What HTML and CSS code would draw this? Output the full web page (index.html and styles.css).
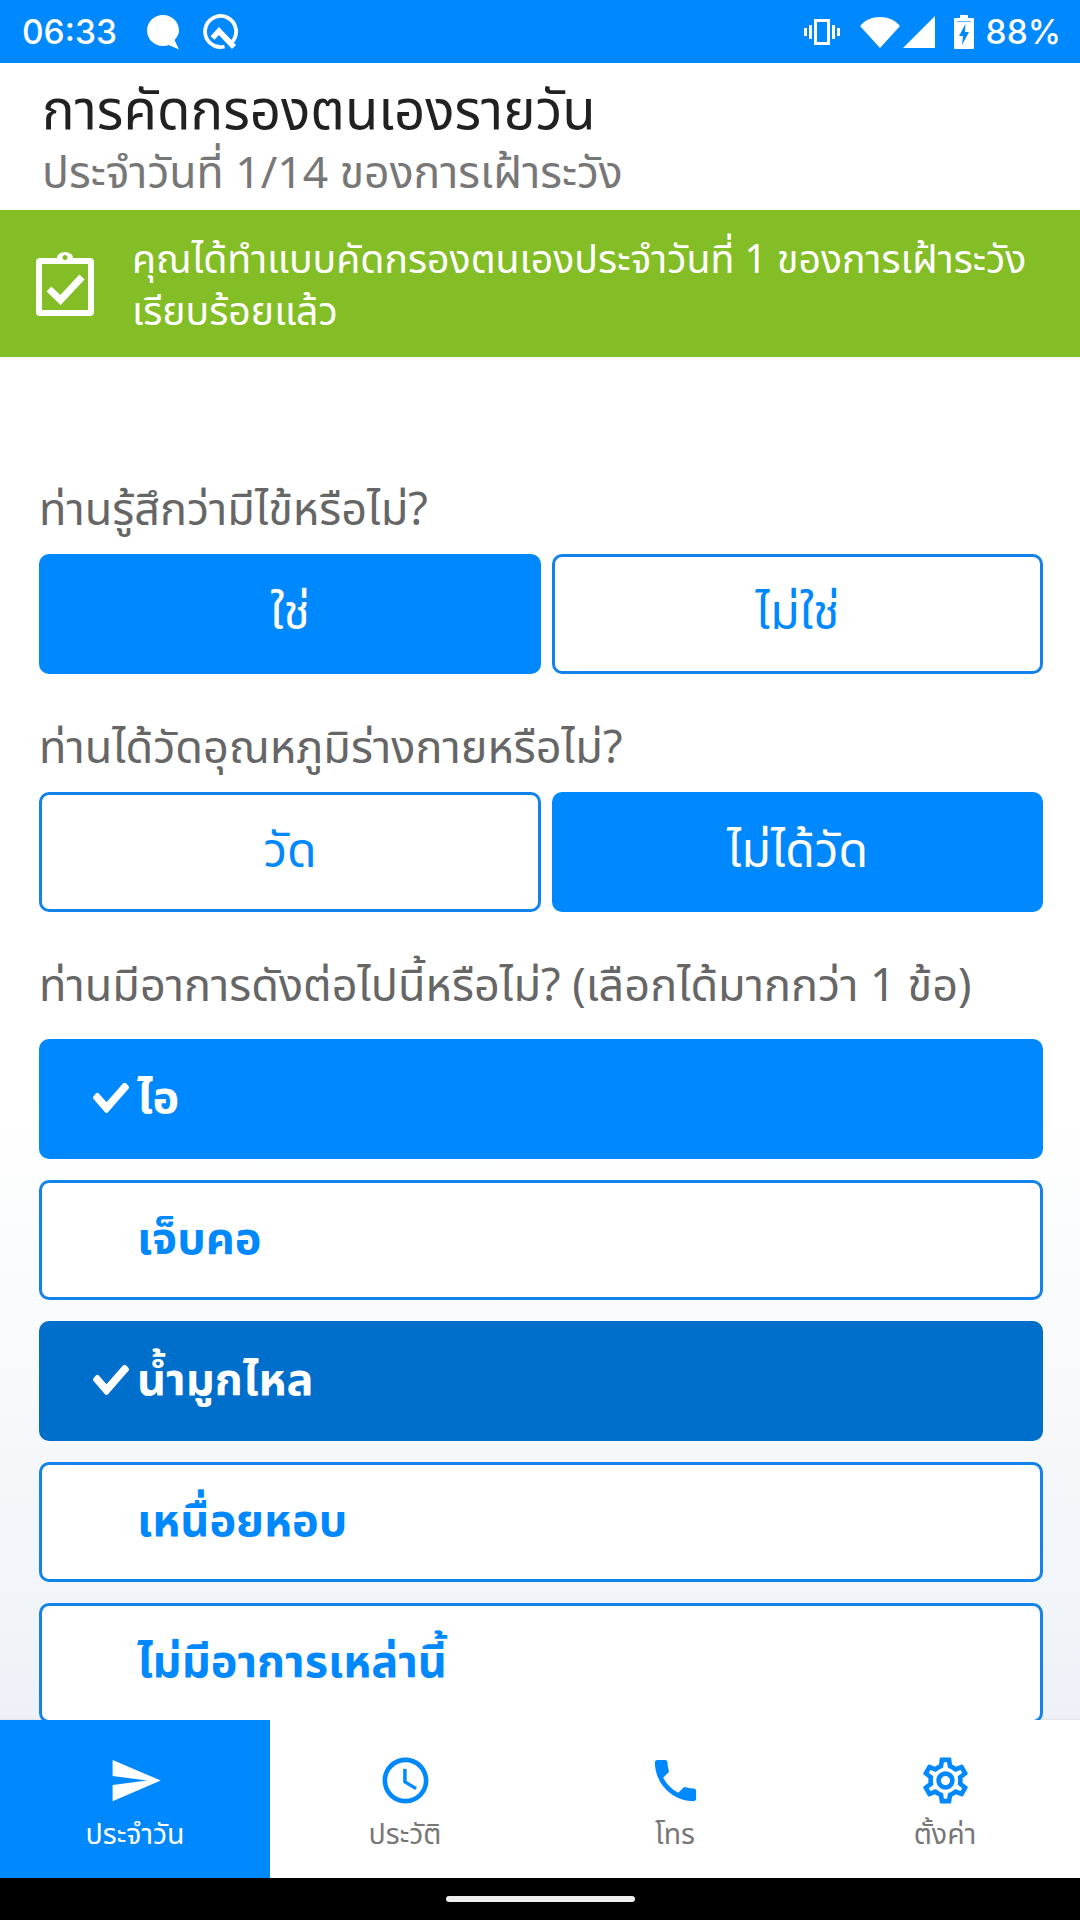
FILE: index.html
```html
<!DOCTYPE html>
<html lang="th">
<head>
    <meta charset="UTF-8">
    <meta name="viewport" content="width=device-width, initial-scale=1.0">
    <title>การคัดกรองตนเองรายวัน</title>
    <link rel="stylesheet" href="styles.css">
</head>
<body>
    <div class="screen">

        <!-- Status bar -->
        <div class="statusbar">
            <div class="status-left">
                <span class="clock">06:33</span>
                <svg class="icon-bubble" viewBox="0 0 34 36"><path d="M17 1C8 1 1 8 1 16.500 1 25 8 32 17 32c2 0 4-.4 5.600-1L33 35.500 28.500 26C31.300 23.300 33 20 33 16.500 33 8 26 1 17 1z" fill="#fff"/></svg>
                <svg class="icon-q" viewBox="0 0 36 36"><path d="M21.500 32.500A15.500 15.500 0 1 1 28.500 28.500" fill="none" stroke="#fff" stroke-width="3.800"/><path d="M9.500 24L16 17 31 33" fill="none" stroke="#fff" stroke-width="5.500"/></svg>
            </div>
            <div class="status-right">
                <svg class="icon-vibrate" viewBox="0 0 38 30"><path d="M11 2h16v26H11zM14 5v20h10V5zM6 8h3v14H6zM29 8h3v14h-3zM1 11h3v8H1zM34 11h3v8h-3z" fill="#fff" fill-rule="evenodd"/></svg>
                <svg class="icon-wifi" viewBox="0 0 40 32"><path d="M0 10C5 4 12 1 20 1s15 3 20 9L20 32z" fill="#fff"/></svg>
                <svg class="icon-signal" viewBox="0 0 32 32"><path d="M32 0v32H0z" fill="#fff"/></svg>
                <svg class="icon-battery" viewBox="0 0 20 34"><path d="M6 0h8v3h5a1 1 0 0 1 1 1v29a1 1 0 0 1-1 1H1a1 1 0 0 1-1-1V4a1 1 0 0 1 1-1h5z" fill="#fff"/><path d="M3 6.500h14" stroke="#0088ff" stroke-width="1.200" opacity=".6"/><path d="M11.500 9L5 21h4l-1 9 7-13h-4z" fill="#0088ff"/></svg>
                <span class="battery-text">88%</span>
            </div>
        </div>

        <!-- Title -->
        <div class="page-head">
            <h1>การคัดกรองตนเองรายวัน</h1>
            <p>ประจำวันที่ 1/14 ของการเฝ้าระวัง</p>
        </div>

        <!-- Done banner -->
        <div class="banner">
            <svg class="banner-icon" viewBox="0 0 58 64">
                <path d="M21 6a8 6 0 0 1 16 0h17a4 4 0 0 1 4 4v50a4 4 0 0 1-4 4H4a4 4 0 0 1-4-4V10a4 4 0 0 1 4-4zM6 12v46h46V12zM29 3a2.500 2.500 0 1 0 .01 0z" fill="#fff" fill-rule="evenodd"/>
                <path d="M13 37l11.500 11L46 25" fill="none" stroke="#fff" stroke-width="7"/>
            </svg>
            <p>คุณได้ทำแบบคัดกรองตนเองประจำวันที่ 1 ของการเฝ้าระวัง<br>เรียบร้อยแล้ว</p>
        </div>

        <!-- Questions -->
        <div class="content">
            <div class="question first">ท่านรู้สึกว่ามีไข้หรือไม่?</div>
            <div class="choice-row">
                <div class="btn btn-on col-a">ใช่</div>
                <div class="btn col-b">ไม่ใช่</div>
            </div>

            <div class="question">ท่านได้วัดอุณหภูมิร่างกายหรือไม่?</div>
            <div class="choice-row">
                <div class="btn col-a">วัด</div>
                <div class="btn btn-on col-b">ไม่ได้วัด</div>
            </div>

            <div class="question">ท่านมีอาการดังต่อไปนี้หรือไม่? (เลือกได้มากกว่า 1 ข้อ)</div>
            <div class="symptoms">
                <div class="btn symptom btn-on"><svg class="tick" viewBox="0 0 512 374" preserveAspectRatio="none"><path d="M173.900 367.400L7.500 201c-10-10-10-26.200 0-36.200l36.200-36.200c10-10 26.200-10 36.200 0L192 240.700 432.100.6c10-10 26.200-10 36.200 0l36.200 36.200c10 10 10 26.200 0 36.200L210.100 367.400c-10 10-26.200 10-36.200 0z" fill="#fff"/></svg>ไอ</div>
                <div class="btn symptom">เจ็บคอ</div>
                <div class="btn symptom btn-pressed"><svg class="tick" viewBox="0 0 512 374" preserveAspectRatio="none"><path d="M173.900 367.400L7.500 201c-10-10-10-26.200 0-36.200l36.200-36.200c10-10 26.200-10 36.200 0L192 240.700 432.100.6c10-10 26.200-10 36.200 0l36.200 36.200c10 10 10 26.200 0 36.200L210.100 367.400c-10 10-26.200 10-36.200 0z" fill="#fff"/></svg>น้ำมูกไหล</div>
                <div class="btn symptom">เหนื่อยหอบ</div>
                <div class="btn symptom">ไม่มีอาการเหล่านี้</div>
            </div>
        </div>

        <!-- Bottom tabs -->
        <div class="tabbar">
            <div class="tab tab-active">
                <svg viewBox="0 0 24 24"><path d="M2.010 21L23 12 2.010 3 2 10l15 2-15 2z" fill="#fff"/></svg>
                <span>ประจำวัน</span>
            </div>
            <div class="tab">
                <svg viewBox="0 0 24 24"><path d="M11.990 2C6.470 2 2 6.480 2 12s4.470 10 9.990 10C17.520 22 22 17.520 22 12S17.520 2 11.990 2zM12 20c-4.420 0-8-3.580-8-8s3.580-8 8-8 8 3.580 8 8-3.580 8-8 8zm.5-13H11v6l5.250 3.150.75-1.230-4.500-2.670z" fill="#0088ff"/></svg>
                <span>ประวัติ</span>
            </div>
            <div class="tab">
                <svg viewBox="0 0 24 24"><path d="M6.620 10.790c1.440 2.830 3.760 5.140 6.590 6.590l2.200-2.200c.27-.27.670-.36 1.020-.24 1.120.37 2.330.57 3.570.57.550 0 1 .45 1 1V20c0 .55-.45 1-1 1-9.390 0-17-7.610-17-17 0-.55.45-1 1-1h3.500c.55 0 1 .45 1 1 0 1.250.2 2.450.57 3.570.11.350.03.740-.25 1.020l-2.200 2.200z" fill="#0088ff"/></svg>
                <span>โทร</span>
            </div>
            <div class="tab">
                <svg viewBox="0 0 24 24"><path d="M19.430 12.980c.04-.32.070-.64.070-.98s-.03-.66-.07-.98l2.110-1.650c.19-.15.24-.42.120-.64l-2-3.460c-.12-.22-.39-.3-.61-.22l-2.490 1c-.52-.4-1.080-.73-1.690-.98l-.38-2.650C14.460 2.180 14.250 2 14 2h-4c-.25 0-.46.18-.49.420l-.38 2.650c-.61.25-1.170.59-1.690.98l-2.490-1c-.23-.09-.49 0-.61.22l-2 3.460c-.13.22-.07.490.12.640l2.110 1.650c-.04.32-.07.650-.07.980s.03.660.07.980l-2.110 1.650c-.19.150-.24.420-.12.640l2 3.460c.12.220.39.300.61.220l2.490-1c.52.400 1.080.730 1.690.980l.38 2.650c.03.240.24.420.49.420h4c.25 0 .46-.18.49-.42l.38-2.650c.61-.25 1.170-.59 1.690-.98l2.490 1c.23.090.49 0 .61-.22l2-3.460c.12-.22.070-.49-.12-.64l-2.110-1.650zM17.450 11.270c.04.310.05.520.05.730s-.02.430-.05.730l-.14 1.130.89.700 1.080.84-.7 1.210-1.270-.51-1.040-.42-.9.680c-.43.320-.84.560-1.250.73l-1.060.43-.16 1.130-.2 1.350h-1.400l-.19-1.350-.16-1.130-1.060-.43c-.43-.18-.83-.41-1.230-.71l-.91-.7-1.060.43-1.270.51-.7-1.210 1.080-.84.890-.7-.14-1.130c-.03-.31-.05-.54-.05-.74s.02-.43.05-.73l.14-1.130-.89-.7-1.080-.84.7-1.210 1.270.51 1.040.42.900-.68c.43-.32.840-.56 1.250-.73l1.060-.43.160-1.130.2-1.350h1.390l.19 1.350.16 1.130 1.060.43c.43.180.83.410 1.230.71l.91.700 1.060-.43 1.270-.51.7 1.210-1.070.85-.89.700.14 1.130zM12 8c-2.210 0-4 1.790-4 4s1.790 4 4 4 4-1.790 4-4-1.790-4-4-4zm0 6c-1.100 0-2-.9-2-2s.9-2 2-2 2 .9 2 2-.9 2-2 2z" fill="#0088ff"/></svg>
                <span>ตั้งค่า</span>
            </div>
        </div>

        <!-- Navigation bar -->
        <div class="navbar">
            <div class="home-pill"></div>
        </div>
    </div>
</body>
</html>
```

FILE: styles.css
```css
html, body {
    margin: 0;
    padding: 0;
}

body {
    font-family: "Noto Sans", "Noto Sans Thai", "Roboto", "DejaVu Sans", sans-serif;
    background-color: #fff;
}

.screen {
    width: 1080px;
    height: 1920px;
    display: flex;
    flex-direction: column;
    overflow: hidden;
}

/* Status bar */
.statusbar {
    height: 63px;
    flex: none;
    background-color: #0088ff;
    color: #fff;
    display: flex;
    justify-content: space-between;
    align-items: center;
    padding: 0 19px 0 22px;
    font-family: "Inter", sans-serif;
    font-size: 33.500px;
    font-weight: 500;
}

.status-left, .status-right {
    display: flex;
    align-items: center;
}

.clock {
    margin-right: 29px;
}

.icon-bubble {
    width: 34px;
    height: 36px;
    margin-right: 23px;
}

.icon-q {
    width: 36px;
    height: 36px;
}

.icon-vibrate {
    width: 38px;
    height: 30px;
    margin-right: 19px;
}

.icon-wifi {
    width: 40px;
    height: 32px;
    margin-right: 3px;
}

.icon-signal {
    width: 32px;
    height: 32px;
    margin-right: 19px;
}

.icon-battery {
    width: 20px;
    height: 34px;
    margin-right: 12px;
}

/* Title */
.page-head {
    height: 147px;
    flex: none;
    box-sizing: border-box;
    padding: 12px 42px 0;
    background-color: #fff;
}

.page-head h1 {
    margin: 0;
    font-size: 54.500px;
    line-height: 66px;
    font-weight: 400;
    color: #212121;
}

.page-head p {
    margin: 0;
    font-size: 44.500px;
    line-height: 60px;
    color: #777;
}

/* Banner */
.banner {
    height: 147px;
    flex: none;
    box-sizing: border-box;
    background-color: #84be26;
    color: #fff;
    display: flex;
    align-items: center;
    padding: 0 36px;
}

.banner-icon {
    width: 58px;
    height: 64px;
    flex: none;
    margin-right: 38px;
}

.banner p {
    margin: 0;
    font-size: 39.200px;
    line-height: 52px;
    white-space: nowrap;
}

/* Questions */
.content {
    flex: 1;
    min-height: 0;
    overflow: hidden;
    padding: 0 37px 0 39px;
    background: linear-gradient(#fff 55%, #eef2f8 100%);
}

.question {
    font-size: 45px;
    line-height: 56px;
    color: #666;
    margin: 44px 0 18px;
}

.question.first {
    margin-top: 123px;
}

.choice-row {
    display: flex;
    gap: 11px;
}

.btn {
    height: 120px;
    box-sizing: border-box;
    border: 3px solid #1283ea;
    border-radius: 10px;
    background-color: #fff;
    color: #0088ff;
    font-size: 48px;
    display: flex;
    align-items: center;
    justify-content: center;
}

.btn-on {
    background-color: #0088ff;
    border-color: #0088ff;
    color: #fff;
}

.btn-pressed {
    background-color: #006fcc;
    border-color: #006fcc;
    color: #fff;
}

.col-a {
    width: 502px;
    flex: none;
}

.col-b {
    flex: 1;
}

.symptoms {
    display: flex;
    flex-direction: column;
    gap: 21px;
    margin-top: 27px;
}

.symptom {
    flex: none;
    justify-content: flex-start;
    padding-left: 95px;
    font-size: 45px;
    font-weight: 700;
    position: relative;
}

.tick {
    position: absolute;
    left: 51px;
    top: 41px;
    width: 36px;
    height: 30px;
}

/* Bottom tabs */
.tabbar {
    height: 158px;
    flex: none;
    display: flex;
    background-color: #fff;
    box-shadow: 0 -1px 2px rgba(0, 0, 0, 0.06);
}

.tab {
    width: 270px;
    box-sizing: border-box;
    padding-top: 33px;
    display: flex;
    flex-direction: column;
    align-items: center;
    color: #777;
    font-size: 28.500px;
}

.tab svg {
    width: 55px;
    height: 55px;
    margin-bottom: 6px;
}

.tab-active {
    background-color: #0088ff;
    color: #fff;
}

/* Navigation bar */
.navbar {
    height: 42px;
    flex: none;
    background-color: #000;
    display: flex;
    justify-content: center;
    align-items: center;
}

.home-pill {
    width: 189px;
    height: 6px;
    border-radius: 3px;
    background-color: #eee;
}
```
